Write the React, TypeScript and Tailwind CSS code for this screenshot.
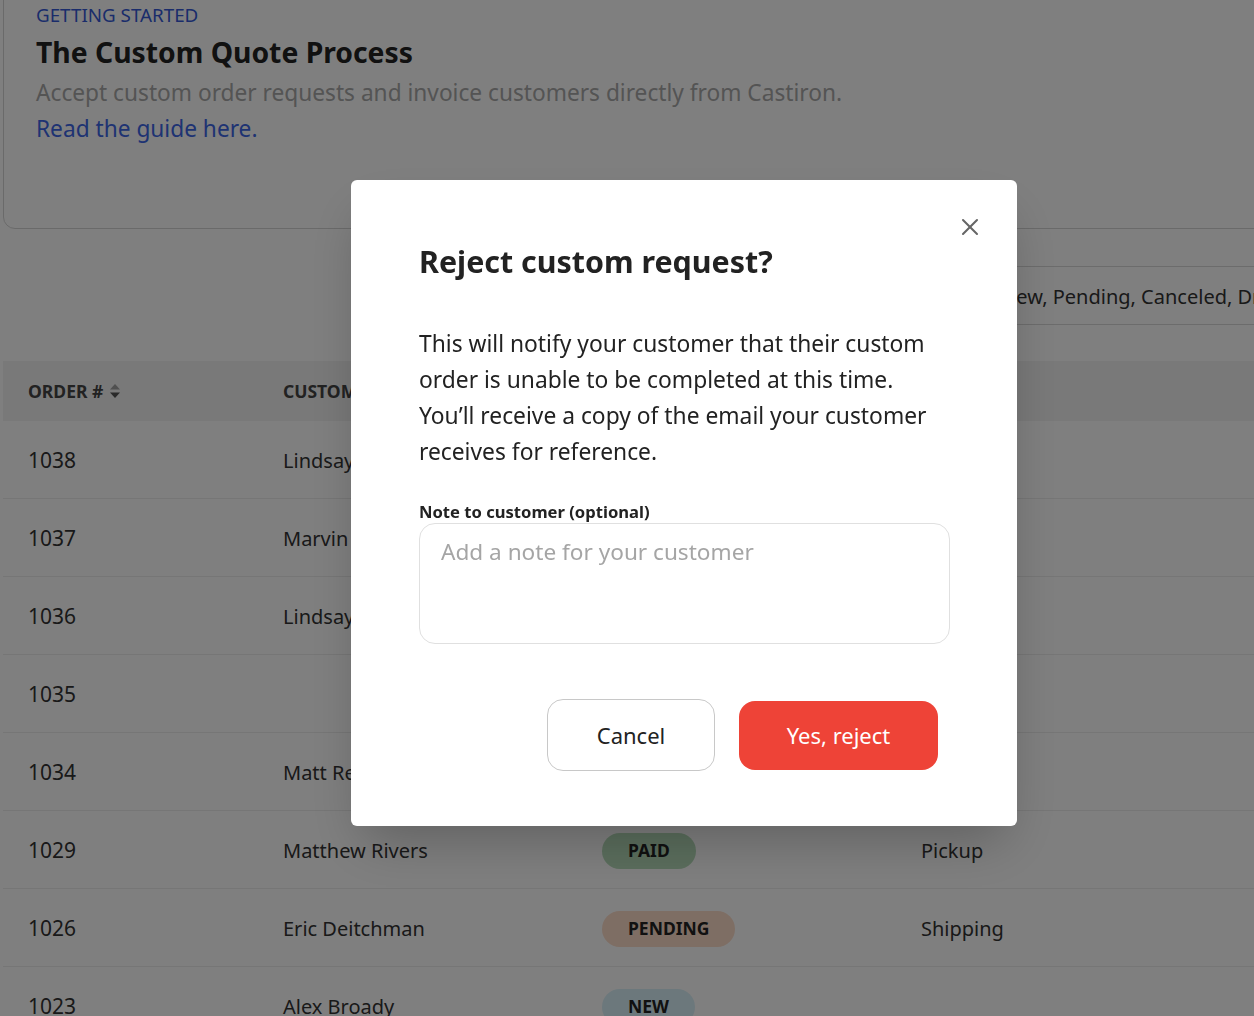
import React from 'react';
import { X } from 'lucide-react';

type Row = { id: string; customer: string; status?: 'PAID' | 'PENDING' | 'NEW'; fulfillment?: string };

const rows: Row[] = [
    { id: '1038', customer: 'Lindsay Marsh', status: 'NEW', fulfillment: 'Pickup' },
    { id: '1037', customer: 'Marvin Cole', status: 'PENDING', fulfillment: 'Shipping' },
    { id: '1036', customer: 'Lindsay Marsh', status: 'PAID', fulfillment: 'Pickup' },
    { id: '1035', customer: '', status: 'NEW', fulfillment: 'Shipping' },
    { id: '1034', customer: 'Matt Reynolds', status: 'PAID', fulfillment: 'Pickup' },
    { id: '1029', customer: 'Matthew Rivers', status: 'PAID', fulfillment: 'Pickup' },
    { id: '1026', customer: 'Eric Deitchman', status: 'PENDING', fulfillment: 'Shipping' },
    { id: '1023', customer: 'Alex Broady', status: 'NEW', fulfillment: '' },
];

const badgeClass: Record<string, string> = {
    PAID: 'bg-[#b6dcba]',
    PENDING: 'bg-[#fcdcc8]',
    NEW: 'bg-[#d8f0f8]',
};

const SortIcon = () => (
    <svg width="12" height="18" viewBox="0 0 12 18" className="ml-1.5">
        <path d="M6 2 L11 7.5 H1 Z" fill="#a0a0a0" />
        <path d="M6 16 L11 10.5 H1 Z" fill="#555" />
    </svg>
);

export default function App() {
    return (
        <div className="relative h-[1016px] w-full overflow-hidden bg-white text-[#333]" style={{ fontFamily: '"Noto Sans", sans-serif' }}>
            <div className="ml-[3px] w-[1320px]">
                {/* getting started card */}
                <div className="-mt-6 h-[253px] rounded-b-xl border border-[#d4d4d4] pl-8 pt-[26px]">
                    <div className="text-[18.8px] leading-6 text-[#3559d6]">GETTING STARTED</div>
                    <h1 className="mt-[5px] text-[28.3px] font-bold leading-10 text-[#222]">The Custom Quote Process</h1>
                    <p className="mt-[5px] text-[22.7px] leading-8 text-[#a8a8a8]">Accept custom order requests and invoice customers directly from Castiron.</p>
                    <a className="mt-1 block text-[22.7px] leading-8 text-[#3c66e6]">Read the guide here.</a>
                </div>

                {/* filter */}
                <div className="mt-[37px] flex justify-end">
                    <div className="flex h-[59px] w-[412px] items-center rounded-md border border-[#d8d8d8] px-5 pt-[3px] text-[20px] text-[#333]">
                        <span className="whitespace-nowrap">Status: New, Pending, Canceled, Draft</span>
                    </div>
                </div>

                {/* table */}
                <div className="mt-[36px]">
                    <div className="grid h-[60px] grid-cols-[280px_319px_319px_1fr] items-center bg-[#f3f3f3] text-[17.5px] font-bold text-[#444]">
                        <div className="flex items-center pl-[25px]">ORDER # <SortIcon /></div>
                        <div>CUSTOMER</div>
                        <div>STATUS</div>
                        <div>TYPE</div>
                    </div>
                    {rows.map((r) => (
                        <div key={r.id} className="grid h-[78px] grid-cols-[280px_319px_319px_1fr] items-center border-b border-[#ececec] pt-[2px] text-[20px] text-[#333]">
                            <div className="pl-[25px] text-[21px]">{r.id}</div>
                            <div>{r.customer}</div>
                            <div>
                                {r.status && (
                                    <span className={`inline-flex h-9 items-center rounded-full px-[26px] text-[17.5px] font-bold text-[#222] ${badgeClass[r.status]}`}>
                                        {r.status}
                                    </span>
                                )}
                            </div>
                            <div>{r.fulfillment}</div>
                        </div>
                    ))}
                </div>
            </div>

            {/* overlay + modal */}
            <div className="fixed inset-0 bg-black/50 pl-[351px] pt-[180px]">
                <div className="relative h-[646px] w-[666px] rounded-md bg-white px-[68px] pt-[62px] shadow-2xl">
                    <button className="absolute right-[33px] top-[33px] text-[#666]">
                        <X size={28} strokeWidth={1.75} />
                    </button>
                    <h2 className="text-[30.4px] font-bold leading-10 text-[#222]">Reject custom request?</h2>
                    <p className="mt-[44px] text-[22.8px] leading-9 text-[#222]">
                        This will notify your customer that their custom order is unable to be completed at this time. You’ll receive a copy of the email your customer receives for reference.
                    </p>
                    <label className="mt-[30px] block text-[16.6px] font-bold leading-6 text-[#222]">Note to customer (optional)</label>
                    <textarea
                        placeholder="Add a note for your customer"
                        className="-mt-[1px] block h-[121px] w-[531px] resize-none rounded-2xl border border-[#e0e0e0] px-[21px] py-[12px] text-[22.6px] leading-8 text-[#222] outline-none placeholder:text-[#a5a5a5]"
                    />
                    <div className="mt-[55px] flex items-center gap-6 pl-[128px]">
                        <button className="h-[72px] w-[168px] rounded-2xl border border-[#c8c8c8] bg-white text-[22px] text-[#222]">Cancel</button>
                        <button className="h-[69px] w-[199px] rounded-2xl bg-[#ee4337] text-[22px] text-white">Yes, reject</button>
                    </div>
                </div>
            </div>
        </div>
    );
}
